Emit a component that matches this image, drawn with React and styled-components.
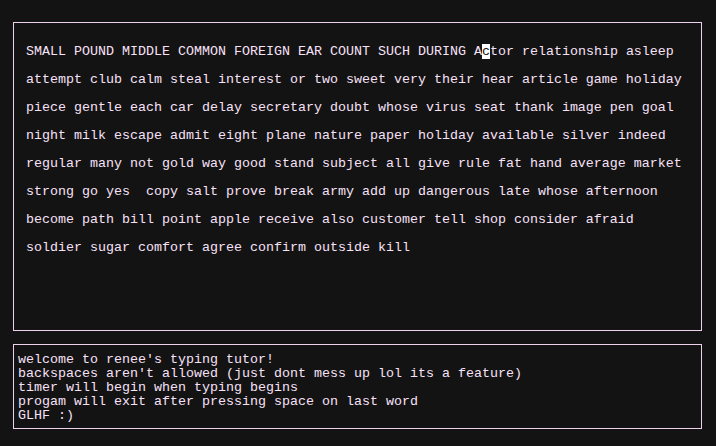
import React from "react";
import styled, { createGlobalStyle } from "styled-components";

const Global = createGlobalStyle`
  html, body { margin: 0; padding: 0; background: #131313; }
  body { width: 716px; height: 446px; overflow: hidden; }
`;

const Screen = styled.div`
  box-sizing: border-box;
  width: 716px;
  height: 446px;
  padding: 22px 14px 0 13px;
  display: flex;
  flex-direction: column;
  gap: 13px;
  background: #131313;
  color: #f8e2f8;
  font-family: "Liberation Mono", "DejaVu Sans Mono", monospace;
  font-size: 13.333px;
`;

const Panel = styled.section`
  box-sizing: border-box;
  border: 1px solid #ecd0ec;
  height: ${(p) => p.$h}px;
  padding: ${(p) => p.$pad};
`;

const Line = styled.div`
  white-space: pre;
  line-height: ${(p) => p.$lh}px;
  height: ${(p) => p.$lh}px;
`;

const Cursor = styled.span`
  background: #ffffff;
  color: #131313;
`;

const wordsLines = [
  "attempt club calm steal interest or two sweet very their hear article game holiday",
  "piece gentle each car delay secretary doubt whose virus seat thank image pen goal",
  "night milk escape admit eight plane nature paper holiday available silver indeed",
  "regular many not gold way good stand subject all give rule fat hand average market",
  "strong go yes  copy salt prove break army add up dangerous late whose afternoon",
  "become path bill point apple receive also customer tell shop consider afraid",
  "soldier sugar comfort agree confirm outside kill",
];

const info = [
  "welcome to renee's typing tutor!",
  "backspaces aren't allowed (just dont mess up lol its a feature)",
  "timer will begin when typing begins",
  "progam will exit after pressing space on last word",
  "GLHF :)",
];

export default function App() {
  return (
    <>
      <Global />
      <Screen>
        <Panel $h={309} $pad="15px 12px 0 12px">
          <Line $lh={28}>
            SMALL POUND MIDDLE COMMON FOREIGN EAR COUNT SUCH DURING A
            <Cursor>c</Cursor>tor relationship asleep
          </Line>
          {wordsLines.map((l, i) => (
            <Line key={i} $lh={28}>
              {l}
            </Line>
          ))}
        </Panel>
        <Panel $h={85} $pad="8px 4px 0 4px">
          {info.map((l, i) => (
            <Line key={i} $lh={14}>
              {l}
            </Line>
          ))}
        </Panel>
      </Screen>
    </>
  );
}
